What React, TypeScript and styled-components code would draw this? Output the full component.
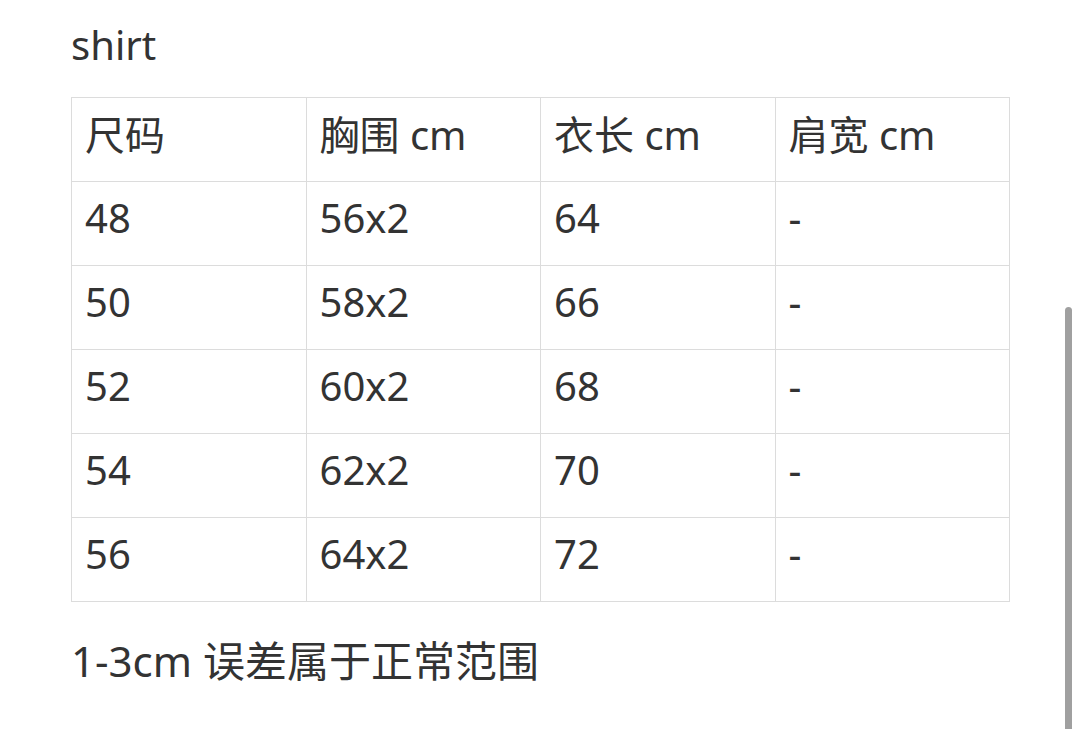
import styled, { createGlobalStyle } from 'styled-components';

const GlobalStyle = createGlobalStyle`
  html, body {
    margin: 0;
    padding: 0;
    background: #ffffff;
  }
  body {
    font-family: 'Noto Sans', 'Noto Sans CJK SC', sans-serif;
    color: #333333;
  }
`;

const rows = [
  ['48', '56x2', '64', '-'],
  ['50', '58x2', '66', '-'],
  ['52', '60x2', '68', '-'],
  ['54', '62x2', '70', '-'],
  ['56', '64x2', '72', '-'],
];

const headers = ['尺码', '胸围 cm', '衣长 cm', '肩宽 cm'];

const App = () => {
  return (
    <Page>
      <GlobalStyle />
      <Content>
        <Title>shirt</Title>
        <SizeTable>
          <thead>
            <tr>
              {headers.map((h) => (
                <Cell as="th" key={h}>
                  {h}
                </Cell>
              ))}
            </tr>
          </thead>
          <tbody>
            {rows.map((row) => (
              <tr key={row[0]}>
                {row.map((value, index) => (
                  <Cell key={index}>{value}</Cell>
                ))}
              </tr>
            ))}
          </tbody>
        </SizeTable>
        <Note>1-3cm 误差属于正常范围</Note>
      </Content>
      <ScrollThumb />
    </Page>
  );
};

const Page = styled.div({
  position: 'relative',
  width: '1080px',
  height: '729px',
  overflow: 'hidden',
  background: '#ffffff',
});

const Content = styled.div({
  padding: '20px 0 0 71px',
  width: '939px',
});

const Title = styled.div({
  fontSize: '40px',
  lineHeight: '50px',
  height: '50px',
  marginBottom: '27px',
  color: '#333333',
});

const SizeTable = styled.table({
  width: '939px',
  borderCollapse: 'collapse',
  tableLayout: 'fixed',
  border: '1px solid #dcdcdc',
});

const Cell = styled.td({
  height: '84px',
  padding: '0 0 13px 13px',
  border: '1px solid #dcdcdc',
  fontSize: '40px',
  fontWeight: 400,
  textAlign: 'left',
  verticalAlign: 'middle',
  color: '#333333',
  boxSizing: 'border-box',
  whiteSpace: 'nowrap',
});

const Note = styled.div({
  marginTop: '34px',
  fontSize: '42px',
  lineHeight: '50px',
  color: '#333333',
  whiteSpace: 'nowrap',
});

const ScrollThumb = styled.div({
  position: 'absolute',
  left: '1065px',
  top: '307px',
  width: '7px',
  height: '440px',
  borderRadius: '4px',
  background: '#a0a0a0',
});

export default App;
